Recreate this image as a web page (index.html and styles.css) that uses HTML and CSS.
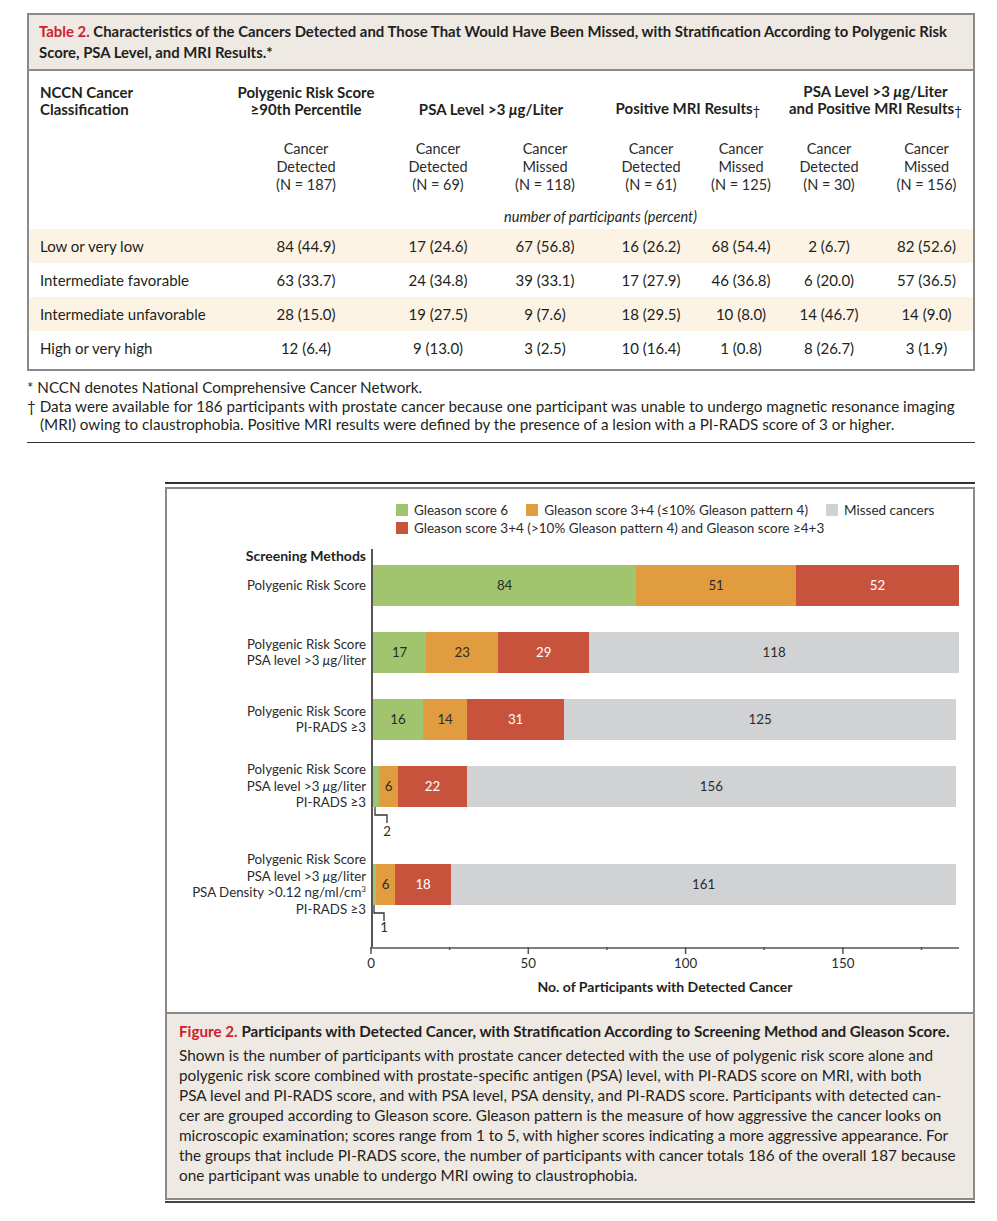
FILE: index.html
```html
<!DOCTYPE html>
<html lang="en">
<head>
<meta charset="utf-8">
<title>Table 2 and Figure 2</title>
<link rel="stylesheet" href="styles.css">
</head>
<body>
<div class="page">
  <section class="tbl-box">
    <div class="tbl-title"><span class="red">Table 2.</span> Characteristics of the Cancers Detected and Those That Would Have Been Missed, with Stratification According to Polygenic Risk<br>Score, PSA Level, and MRI Results.*</div>
    <table class="data">
      <colgroup>
        <col class="c1"><col class="c2"><col class="c3"><col class="c4"><col class="c5"><col class="c6"><col class="c7"><col class="c8">
      </colgroup>
      <thead>
        <tr class="h1">
          <th class="lbl">NCCN Cancer<br>Classification</th>
          <th>Polygenic Risk Score<br>≥90th Percentile</th>
          <th colspan="2">PSA Level &gt;3 <i>μ</i>g/Liter</th>
          <th colspan="2">Positive MRI Results<span class="dg">†</span></th>
          <th colspan="2">PSA Level &gt;3 <i>μ</i>g/Liter<br>and Positive MRI Results<span class="dg">†</span></th>
        </tr>
        <tr class="h2">
          <td></td>
          <td>Cancer<br>Detected<br>(N = 187)</td>
          <td>Cancer<br>Detected<br>(N = 69)</td>
          <td>Cancer<br>Missed<br>(N = 118)</td>
          <td>Cancer<br>Detected<br>(N = 61)</td>
          <td>Cancer<br>Missed<br>(N = 125)</td>
          <td>Cancer<br>Detected<br>(N = 30)</td>
          <td>Cancer<br>Missed<br>(N = 156)</td>
        </tr>
        <tr class="h3">
          <td></td>
          <td colspan="7"><i>number of participants (percent)</i></td>
        </tr>
      </thead>
      <tbody>
        <tr class="alt">
          <td class="lbl">Low or very low</td>
          <td>84 (44.9)</td><td>17 (24.6)</td><td>67 (56.8)</td><td>16 (26.2)</td><td>68 (54.4)</td><td>2 (6.7)</td><td>82 (52.6)</td>
        </tr>
        <tr>
          <td class="lbl">Intermediate favorable</td>
          <td>63 (33.7)</td><td>24 (34.8)</td><td>39 (33.1)</td><td>17 (27.9)</td><td>46 (36.8)</td><td>6 (20.0)</td><td>57 (36.5)</td>
        </tr>
        <tr class="alt">
          <td class="lbl">Intermediate unfavorable</td>
          <td>28 (15.0)</td><td>19 (27.5)</td><td>9 (7.6)</td><td>18 (29.5)</td><td>10 (8.0)</td><td>14 (46.7)</td><td>14 (9.0)</td>
        </tr>
        <tr>
          <td class="lbl">High or very high</td>
          <td>12 (6.4)</td><td>9 (13.0)</td><td>3 (2.5)</td><td>10 (16.4)</td><td>1 (0.8)</td><td>8 (26.7)</td><td>3 (1.9)</td>
        </tr>
      </tbody>
    </table>
  </section>

  <div class="notes">
    <p class="note">* NCCN denotes National Comprehensive Cancer Network.</p>
    <p class="note">† Data were available for 186 participants with prostate cancer because one participant was unable to undergo magnetic resonance imaging<br>(MRI) owing to claustrophobia. Positive MRI results were defined by the presence of a lesion with a PI-RADS score of 3 or higher.</p>
  </div>
  <div class="rule"></div>

  <div class="fig">
    <div class="fig-box">
      <div class="chart">
        <div class="legend">
          <div class="legend-row">
            <span class="lg"><span class="sw green"></span>Gleason score 6</span>
            <span class="lg"><span class="sw orange"></span>Gleason score 3+4 (≤10% Gleason pattern 4)</span>
            <span class="lg"><span class="sw gray"></span>Missed cancers</span>
          </div>
          <div class="legend-row">
            <span class="lg"><span class="sw red"></span>Gleason score 3+4 (&gt;10% Gleason pattern 4) and Gleason score ≥4+3</span>
          </div>
        </div>

        <div class="plot">
          <div class="lab head"><span>Screening Methods</span></div>
          <div class="cell head-cell"></div>

          <div class="lab"><span>Polygenic Risk Score</span></div>
          <div class="cell"><div class="bar">
            <span class="seg green" style="width:44.92%">84</span>
            <span class="seg orange" style="width:27.27%">51</span>
            <span class="seg red" style="width:27.81%">52</span>
          </div></div>
          <div class="gap-l"></div><div class="cell gap"></div>

          <div class="lab"><span>Polygenic Risk Score<br>PSA level &gt;3 <i>μ</i>g/liter</span></div>
          <div class="cell"><div class="bar">
            <span class="seg green" style="width:9.09%">17</span>
            <span class="seg orange" style="width:12.30%">23</span>
            <span class="seg red" style="width:15.51%">29</span>
            <span class="seg gray" style="width:63.10%">118</span>
          </div></div>
          <div class="gap-l"></div><div class="cell gap"></div>

          <div class="lab"><span>Polygenic Risk Score<br>PI-RADS ≥3</span></div>
          <div class="cell"><div class="bar">
            <span class="seg green" style="width:8.56%">16</span>
            <span class="seg orange" style="width:7.49%">14</span>
            <span class="seg red" style="width:16.58%">31</span>
            <span class="seg gray" style="width:66.84%">125</span>
          </div></div>
          <div class="gap-l"></div><div class="cell gap"></div>

          <div class="lab"><span>Polygenic Risk Score<br>PSA level &gt;3 <i>μ</i>g/liter<br>PI-RADS ≥3</span></div>
          <div class="cell"><div class="bar">
            <span class="seg green" style="width:1.07%"></span>
            <span class="seg orange" style="width:3.21%">6</span>
            <span class="seg red" style="width:11.76%">22</span>
            <span class="seg gray" style="width:83.42%">156</span>
          </div></div>
          <div class="gap-l"></div>
          <div class="cell callout-a">
            <svg class="callout" width="40" height="57" viewBox="0 0 40 57">
              <path d="M2 0 V8 H14 V16" fill="none" stroke="#333" stroke-width="1.3"/>
              <text x="14" y="29" text-anchor="middle">2</text>
            </svg>
          </div>

          <div class="lab"><span>Polygenic Risk Score<br>PSA level &gt;3 <i>μ</i>g/liter<br>PSA Density &gt;0.12 ng/ml/cm<sup>3</sup><br>PI-RADS ≥3</span></div>
          <div class="cell"><div class="bar">
            <span class="seg green" style="width:0.53%"></span>
            <span class="seg orange" style="width:3.21%">6</span>
            <span class="seg red" style="width:9.63%">18</span>
            <span class="seg gray" style="width:86.10%">161</span>
          </div></div>
          <div class="gap-l"></div>
          <div class="cell callout-b">
            <svg class="callout" width="40" height="42" viewBox="0 0 40 42">
              <path d="M1 0 V8 H11 V16" fill="none" stroke="#333" stroke-width="1.3"/>
              <text x="11" y="27" text-anchor="middle">1</text>
            </svg>
          </div>

          <div class="gap-l"></div>
          <div class="axis-cell">
            <svg class="axis" width="592" height="26" viewBox="0 0 592 26">
              <g stroke="#555" stroke-width="1.5">
                <line x1="0" y1="1" x2="589" y2="1"/>
                <line x1="1" y1="0" x2="1" y2="7"/>
                <line x1="158.3" y1="0" x2="158.3" y2="7"/>
                <line x1="315.6" y1="0" x2="315.6" y2="7"/>
                <line x1="472.9" y1="0" x2="472.9" y2="7"/>
                <line x1="79.6" y1="0" x2="79.6" y2="3"/>
                <line x1="236.9" y1="0" x2="236.9" y2="3"/>
                <line x1="394.2" y1="0" x2="394.2" y2="3"/>
                <line x1="551.5" y1="0" x2="551.5" y2="3"/>
              </g>
              <g class="ticks">
                <text x="1" y="21" text-anchor="middle">0</text>
                <text x="158.3" y="21" text-anchor="middle">50</text>
                <text x="315.6" y="21" text-anchor="middle">100</text>
                <text x="472.9" y="21" text-anchor="middle">150</text>
              </g>
            </svg>
          </div>

          <div class="gap-l"></div>
          <div class="axis-title">No. of Participants with Detected Cancer</div>
        </div>
      </div>

      <div class="caption">
        <p class="cap-title"><span class="red">Figure 2.</span> Participants with Detected Cancer, with Stratification According to Screening Method and Gleason Score.</p>
        <p class="cap-body">Shown is the number of participants with prostate cancer detected with the use of polygenic risk score alone and<br>polygenic risk score combined with prostate-specific antigen (PSA) level, with PI-RADS score on MRI, with both<br>PSA level and PI-RADS score, and with PSA level, PSA density, and PI-RADS score. Participants with detected can-<br>cer are grouped according to Gleason score. Gleason pattern is the measure of how aggressive the cancer looks on<br>microscopic examination; scores range from 1 to 5, with higher scores indicating a more aggressive appearance. For<br>the groups that include PI-RADS score, the number of participants with cancer totals 186 of the overall 187 because<br>one participant was unable to undergo MRI owing to claustrophobia.</p>
      </div>
    </div>
  </div>
</div>
</body>
</html>
```

FILE: styles.css
```css
* { box-sizing: border-box; }

body {
  margin: 0;
  background: #ffffff;
  font-family: Lato, "Open Sans", "DejaVu Sans", sans-serif;
  color: #231f20;
}

.page {
  padding-top: 13px;
  padding-bottom: 20px;
}

.red { color: #d0202f; }

/* ---------- Table ---------- */
.tbl-box {
  margin-left: 27px;
  width: 948px;
  border: 2px solid #8a8a8a;
  padding-bottom: 4px;
}

.tbl-title {
  background: #efe9e4;
  border-bottom: 2px solid #8a8a8a;
  padding: 6px 10px;
  font-weight: 700;
  font-size: 14.9px;
  line-height: 21px;
}

.data {
  width: 100%;
  border-collapse: collapse;
  table-layout: fixed;
}

.c1 { width: 199px; }
.c2 { width: 156px; }
.c3 { width: 108px; }
.c4 { width: 106px; }
.c5 { width: 106px; }
.c6 { width: 74px; }
.c7 { width: 102px; }
.c8 { width: 93px; }

.data th,
.data td {
  padding: 0;
  text-align: center;
  font-weight: 400;
}

.data .lbl {
  text-align: left;
  padding-left: 11px;
}

.h1 th {
  font-weight: 700;
  font-size: 15px;
  line-height: 17px;
  padding-top: 12px;
  vertical-align: bottom;
}

.dg {
  font-weight: 400;
  font-size: 0.9em;
  position: relative;
  top: 2px;
}

.h2 td {
  font-size: 14.5px;
  line-height: 18px;
  padding-top: 22px;
  color: #2b2b2b;
}

.h3 td {
  font-size: 14.5px;
  line-height: 18px;
  padding-top: 14px;
  padding-bottom: 3px;
}

.data tbody td {
  font-size: 15px;
  height: 34px;
  vertical-align: middle;
}

.data tbody tr.alt { background: #fcf3e4; }

/* ---------- Notes ---------- */
.notes {
  margin: 7px 0 0 27px;
  width: 948px;
}

.note {
  margin: 0;
  font-size: 15.2px;
  line-height: 18.5px;
  padding-left: 13px;
  text-indent: -13px;
}

.rule {
  margin: 8px 0 0 27px;
  width: 948px;
  border-top: 1px solid #333;
}

/* ---------- Figure ---------- */
.fig {
  margin: 39px 0 0 165px;
  width: 810px;
  border-top: 2px solid #333;
  padding-top: 3px;
  border-bottom: 2px solid #444;
  padding-bottom: 1px;
}

.fig-box {
  border: 2px solid #8a8a8a;
}

.chart {
  padding: 12px 0 17px 0;
  font-size: 13.3px;
  color: #2b2b2b;
}

.legend {
  margin-left: 229px;
  line-height: 18px;
  font-size: 13.5px;
}

.legend-row {
  display: flex;
  align-items: center;
}

.lg {
  display: inline-flex;
  align-items: center;
  margin-right: 18px;
}

.sw {
  display: inline-block;
  width: 12px;
  height: 12px;
  margin-right: 6px;
}

.green { background: #a0c56e; }
.orange { background: #e09c3e; }
.red.sw, .seg.red { background: #c8533c; }
.gray { background: #d1d2d4; }

.plot {
  margin-top: 12px;
  display: grid;
  grid-template-columns: 204px 588px;
}

.lab {
  height: 41px;
  display: flex;
  align-items: center;
  justify-content: flex-end;
  padding-right: 5px;
  line-height: 16.5px;
  white-space: nowrap;
}

.lab > span {
  display: block;
  text-align: right;
}

.lab sup {
  font-size: 8px;
  line-height: 0;
  vertical-align: 5px;
}

.lab.head {
  height: 16px;
  font-weight: 700;
  font-size: 14px;
  color: #231f20;
}

.cell {
  border-left: 2px solid #555;
}

.head-cell { height: 16px; }
.gap-l { height: 0; }
.gap { height: 26px; }
.callout-a { height: 57px; }
.callout-b { height: 42px; }

.callout {
  display: block;
  font-family: Lato, "Open Sans", sans-serif;
  font-size: 13.3px;
  fill: #2b2b2b;
}

.bar {
  display: flex;
  height: 41px;
}

.seg {
  display: flex;
  align-items: center;
  justify-content: center;
  height: 41px;
  flex: none;
  font-size: 13.3px;
  color: #2b2b2b;
}

.seg.red { color: #ffffff; }

.axis-cell {
  height: 26px;
  margin-left: -1px;
}

.axis {
  display: block;
  overflow: visible;
}

.ticks text {
  font-family: Lato, "Open Sans", sans-serif;
  font-size: 13.3px;
  fill: #2b2b2b;
}

.axis-title {
  margin-top: 6px;
  width: 588px;
  text-align: center;
  font-weight: 700;
  font-size: 14px;
  line-height: 16px;
  color: #231f20;
}

.caption {
  border-top: 2px solid #8a8a8a;
  background: #efe9e4;
  padding: 7px 12px 13px 12px;
}

.caption p { margin: 0; }

.cap-title {
  font-weight: 700;
  font-size: 15.2px;
  line-height: 20px;
  margin-bottom: 4px !important;
}

.cap-body {
  font-size: 15.3px;
  line-height: 20px;
}
```
